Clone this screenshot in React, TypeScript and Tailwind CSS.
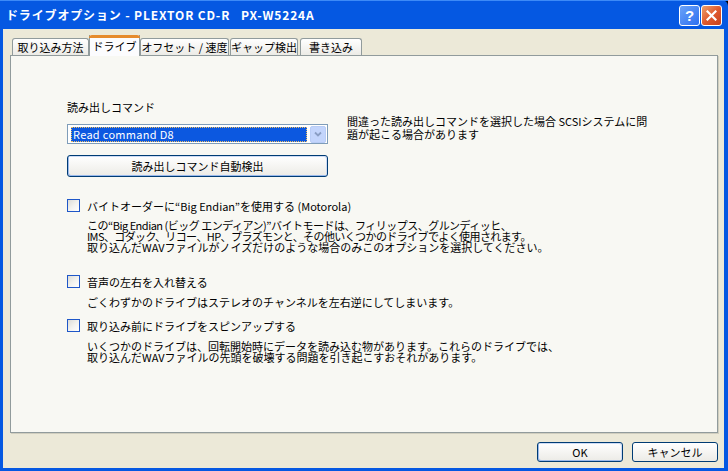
import React from "react";

const F = "font-['Noto_Sans_CJK_JP','Noto_Sans',sans-serif]";

function Tab({ label, w, ml = 0, selected = false }: { label: string; w: number; ml?: number; selected?: boolean }) {
  if (selected) {
    return (
      <div
        className="relative z-10 flex h-[21px] flex-col items-center border-x border-[#919b9c] bg-[#fcfcfe]"
        style={{ width: w, marginLeft: ml }}
      >
        <div className="absolute -left-px -right-px top-0 h-[3px] rounded-t-[3px] bg-[#e68b2c]" />
        <div className="mt-[4px] text-[11px] leading-[14px] text-black">{label}</div>
      </div>
    );
  }
  return (
    <div
      className="mb-[1px] flex h-[17px] items-center justify-center rounded-t-[3px] border border-b-0 border-[#919b9c] bg-gradient-to-b from-white to-[#ecebe6] text-[11px] leading-[14px] text-black"
      style={{ width: w, marginLeft: ml }}
    >
      {label}
    </div>
  );
}

function CheckBox() {
  return <div className="h-[13px] w-[13px] shrink-0 border border-[#1f57c8] bg-gradient-to-br from-[#dcdcd7] via-[#f2f2ee] to-white" />;
}

export default function App() {
  return (
    <div className={`${F} h-[471px] w-[728px] bg-black text-black`}>
      <div className="flex h-full w-full flex-col rounded-tr-[6px] bg-[#0558e2]">
        {/* Title bar */}
        <div className="relative flex h-[29px] shrink-0 items-center border-t border-[#3d8af7] pl-[6px]">
          <span className="whitespace-pre text-[12px] font-bold leading-[14px] tracking-[0.85px] text-white">
            {"ドライブオプション - PLEXTOR CD-R   PX-W5224A"}
          </span>
          <div className="ml-auto mr-[6px] mt-[1px] flex gap-[1px]">
            <div className="flex h-[21px] w-[21px] items-center justify-center rounded-[3px] border border-white bg-gradient-to-br from-[#6aa2f8] to-[#2d6ff0]">
              <span className="font-['Liberation_Sans',sans-serif] text-[15px] font-bold leading-none text-white">?</span>
            </div>
            <div className="flex h-[21px] w-[21px] items-center justify-center rounded-[3px] border border-white bg-gradient-to-br from-[#e9a06c] via-[#e05a2e] to-[#c8401c]">
              <svg width="11" height="11" viewBox="0 0 11 11">
                <path d="M1.5 1.5 L9.5 9.5 M9.5 1.5 L1.5 9.5" stroke="white" strokeWidth="2.2" strokeLinecap="square" />
              </svg>
            </div>
          </div>
        </div>

        {/* Client area */}
        <div className="ml-[3px] mr-[4px] flex flex-1 flex-col bg-[#ece9d8] text-[11px] leading-[11px]">
          {/* tabs */}
          <div className="ml-[9px] mt-[6px] flex h-[21px] items-end -mb-px">
            <Tab label="取り込み方法" w={77} />
            <Tab label="ドライブ" w={51} selected />
            <Tab label="オフセット / 速度" w={89} />
            <Tab label="ギャップ検出" w={68} ml={1} />
            <Tab label="書き込み" w={62} ml={2} />
          </div>

          {/* panel */}
          <div className="ml-[7px] flex h-[378px] w-[708px] flex-col border border-[#919b9c] bg-[#f8f8f3] pl-[56px] pt-[45px] shadow-[1px_1px_0_#d0cebf]">
            <div className="flex">
              <div className="flex w-[261px] flex-col">
                <div className="leading-[12px]">読み出しコマンド</div>
                <div className="mt-[11px] flex h-[20px] items-center border border-[#7f9db9] bg-white pl-[3px] pr-px">
                  <div className="flex h-[15px] flex-1 items-center border border-dotted border-[#f0c060] bg-[#0c58e0] pl-[1px] text-[11px] leading-[12px] tracking-[0.3px] text-white">
                    Read command D8
                  </div>
                  <div className="ml-[3px] flex h-[17px] w-[16px] items-center justify-center rounded-[2px] border border-[#b9cdf6] bg-[#c3d5fc]">
                    <svg width="8" height="6" viewBox="0 0 8 6">
                      <path d="M1 1.5 L4 4.5 L7 1.5" stroke="#8a9ec4" strokeWidth="1.8" fill="none" />
                    </svg>
                  </div>
                </div>
                <div className="mt-[11px] flex h-[22px] items-center justify-center rounded-[3px] border border-[#003c74] bg-gradient-to-b from-white to-[#ecebe6] leading-[12px] shadow-[inset_1px_-1px_0_#9ab9ec,inset_-1px_1px_0_#cedcf5]">
                  読み出しコマンド自動検出
                </div>
              </div>
              <div className="ml-[19px] mt-[14px] whitespace-nowrap leading-[13px]">
                間違った読み出しコマンドを選択した場合 SCSIシステムに問
                <br />
                題が起こる場合があります
              </div>
            </div>

            <div className="mt-[22px] flex h-[13px] items-center">
              <CheckBox />
              <span className="ml-[7px] whitespace-nowrap leading-[12px]">バイトオーダーに“Big Endian”を使用する (Motorola)</span>
            </div>
            <div className="ml-[20px] mt-[8px] whitespace-nowrap leading-[11px]">
              <div className="tracking-[-0.5px]">この“Big Endian (ビッグ エンディアン)”バイトモードは、フィリップス、グルンディッヒ、</div>
              <div className="tracking-[-0.6px]">IMS、コダック、リコー、HP、プラズモンと、その他いくつかのドライブでよく使用されます。</div>
              <div>取り込んだWAVファイルがノイズだけのような場合のみこのオプションを選択してください。</div>
            </div>

            <div className="mt-[22px] flex h-[13px] items-center">
              <CheckBox />
              <span className="ml-[7px] whitespace-nowrap leading-[12px]">音声の左右を入れ替える</span>
            </div>
            <div className="ml-[20px] mt-[9px] whitespace-nowrap leading-[11px]">
              ごくわずかのドライブはステレオのチャンネルを左右逆にしてしまいます。
            </div>

            <div className="mt-[11px] flex h-[13px] items-center">
              <CheckBox />
              <span className="ml-[7px] whitespace-nowrap leading-[12px]">取り込み前にドライブをスピンアップする</span>
            </div>
            <div className="ml-[20px] mt-[9px] whitespace-nowrap leading-[11px]">
              <div>いくつかのドライブは、回転開始時にデータを読み込む物があります。これらのドライブでは、</div>
              <div>取り込んだWAVファイルの先頭を破壊する問題を引き起こすおそれがあります。</div>
            </div>
          </div>

          {/* buttons */}
          <div className="mr-[6px] mt-[9px] flex justify-end gap-[9px]">
            <div className="flex h-[20px] w-[86px] items-center justify-center rounded-[3px] border border-[#003c74] bg-gradient-to-b from-white to-[#ecebe6] leading-[12px] shadow-[inset_1px_-1px_0_#9ab9ec,inset_-1px_1px_0_#cedcf5]">
              OK
            </div>
            <div className="flex h-[20px] w-[86px] items-center justify-center rounded-[3px] border border-[#003c74] bg-gradient-to-b from-white to-[#ecebe6] leading-[12px]">
              キャンセル
            </div>
          </div>
        </div>
        <div className="h-[3px] shrink-0" />
      </div>
    </div>
  );
}
